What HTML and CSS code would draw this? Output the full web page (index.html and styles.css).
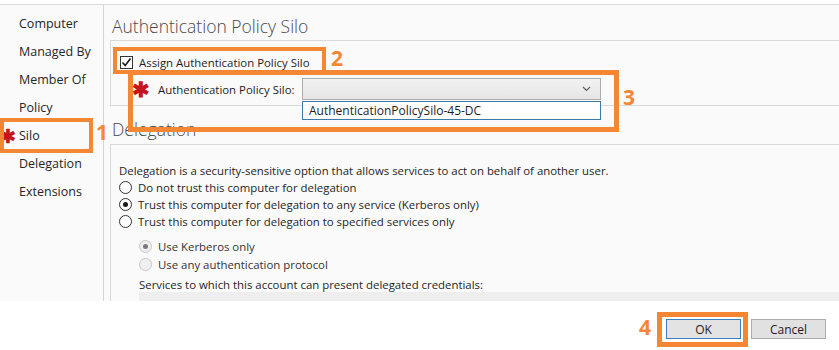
FILE: index.html
```html
<!DOCTYPE html>
<html>
    <head>
        <title>Authentication Policy Silo</title>
        <link rel="stylesheet" href="styles.css">
    </head>
    <body>
        <div class="window">
            <div class="main">
                <ul class="nav">
                    <li>Computer</li>
                    <li>Managed By</li>
                    <li>Member Of</li>
                    <li>Policy</li>
                    <li><span class="req">&#10033;</span>Silo</li>
                    <li>Delegation</li>
                    <li>Extensions</li>
                </ul>
                <div class="content">
                    <h2>Authentication Policy Silo</h2>
                    <div class="group silo">
                        <label class="checkRow">
                            <span class="check">
                                <svg width="11" height="11" viewBox="0 0 11 11">
                                    <polyline points="1.5,5.5 4.2,8.5 9.5,1.5" fill="none" stroke="#1a1a1a" stroke-width="1.6" />
                                </svg>
                            </span>
                            Assign Authentication Policy Silo
                        </label>
                        <div class="fieldRow">
                            <span class="req big">&#10033;</span>
                            <span class="fieldLabel">Authentication Policy Silo:</span>
                            <div class="combo">
                                <svg class="chevron" width="9" height="6" viewBox="0 0 9 6">
                                    <polyline points="1,1 4.5,4.5 8,1" fill="none" stroke="#606060" stroke-width="1.2" />
                                </svg>
                                <div class="dropList">AuthenticationPolicySilo-45-DC</div>
                            </div>
                        </div>
                    </div>

                    <h2>Delegation</h2>
                    <div class="group deleg">
                        <p class="intro">Delegation is a security-sensitive option that allows services to act on behalf of another user.</p>
                        <div class="radio"><span class="dot"></span>Do not trust this computer for delegation</div>
                        <div class="radio"><span class="dot on"></span>Trust this computer for delegation to any service (Kerberos only)</div>
                        <div class="radio"><span class="dot"></span>Trust this computer for delegation to specified services only</div>
                        <div class="sub">
                            <div class="radio off"><span class="dot on"></span>Use Kerberos only</div>
                            <div class="radio off"><span class="dot"></span>Use any authentication protocol</div>
                            <p class="services">Services to which this account can present delegated credentials:</p>
                            <div class="serviceList"></div>
                        </div>
                    </div>
                </div>
            </div>
            <div class="footer">
                <button class="btn default">OK</button>
                <button class="btn">Cancel</button>
            </div>

            <!-- callouts -->
            <div class="mark m1"></div><span class="num n1">1</span>
            <div class="mark m2"></div><span class="num n2">2</span>
            <div class="mark m3"></div><span class="num n3">3</span>
            <div class="mark m4"></div><span class="num n4">4</span>
        </div>
    </body>
</html>
```

FILE: styles.css
```css
body {
    margin: 0;
    background: #fff;
    font-family: 'Open Sans', 'Noto Sans', sans-serif;
    font-size: 11.4px;
    color: #1e1e1e;
}

.window {
    position: relative;
    width: 839px;
    height: 350px;
    overflow: hidden;
}

.main {
    display: flex;
    margin-top: 4px;
    height: 296px;
    border-top: 1px solid #dadada;
    background: #fafafa;
    overflow: hidden;
}

.nav {
    list-style: none;
    margin: 0;
    padding: 5px 0 0 0;
    width: 103px;
    border-right: 1px solid #d5d5d5;
    flex-shrink: 0;
}

.nav li {
    height: 28px;
    line-height: 28px;
    padding-left: 19px;
    font-size: 12.5px;
    color: #262626;
}

.req {
    display: inline-block;
    color: #c4161c;
    font-weight: bold;
}

.nav .req {
    width: 19px;
    margin-left: -19px;
    font-size: 19px;
    vertical-align: top;
}

.content {
    flex: 1;
    padding-left: 6px;
}

h2 {
    margin: 0;
    font-weight: 300;
    font-size: 17.5px;
    color: #4a4a4a;
    padding-left: 2px;
    line-height: 24px;
}

.content h2:first-child {
    margin-top: 9px;
}

.group {
    border: 1px solid #d9d9d9;
    border-right: none;
    background: #fafafa;
}

.silo {
    margin-top: 2px;
    height: 66px;
    padding: 12px 0 0 9px;
    box-sizing: border-box;
}

.checkRow {
    display: flex;
    align-items: center;
    height: 18px;
    gap: 6px;
}

.check {
    width: 11px;
    height: 11px;
    border: 1px solid #333;
    background: #fff;
    display: flex;
    align-items: center;
    justify-content: center;
}

.fieldRow {
    display: flex;
    align-items: center;
    margin-top: 7px;
    padding-left: 12px;
    height: 22px;
}

.req.big {
    width: 26px;
    font-size: 21px;
}

.fieldLabel {
    width: 144px;
}

.combo {
    position: relative;
    width: 297px;
    height: 20px;
    border: 1px solid #acacac;
    background: linear-gradient(#f2f2f2, #e5e5e5);
}

.chevron {
    position: absolute;
    right: 9px;
    top: 7px;
}

.dropList {
    position: absolute;
    left: -1px;
    top: 22px;
    width: 291px;
    height: 17px;
    line-height: 17px;
    padding-left: 6px;
    background: #fff;
    border: 1px solid #3c7aa6;
    font-size: 12px;
    z-index: 2;
}

.silo + h2 {
    margin-top: 11px;
}

.deleg {
    margin-top: 3px;
    padding: 17px 0 0 8px;
    height: 200px;
}

.intro {
    margin: 0;
    line-height: 17px;
}

.radio {
    display: flex;
    align-items: center;
    height: 17px;
    gap: 6px;
}

.dot {
    width: 11px;
    height: 11px;
    border: 1px solid #333;
    border-radius: 50%;
    background: #fff;
    position: relative;
}

.dot.on:after {
    content: '';
    position: absolute;
    left: 3px;
    top: 3px;
    width: 5px;
    height: 5px;
    border-radius: 50%;
    background: #1a1a1a;
}

.sub {
    padding-left: 20px;
    margin-top: 7px;
}

.sub .radio {
    height: 18px;
}

.radio.off {
    color: #333;
}

.radio.off .dot {
    border-color: #c6c6c6;
    background: #f0f0f0;
}

.radio.off .dot.on:after {
    background: #7a7a7a;
}

.services {
    margin: 4px 0 0 0;
    line-height: 15px;
}

.serviceList {
    background: #eeeeee;
    height: 40px;
}

.footer {
    display: flex;
    justify-content: flex-end;
    gap: 10px;
    padding: 18px 13px 0 0;
}

.btn {
    width: 75px;
    height: 20px;
    font-family: inherit;
    font-size: 12px;
    color: #1e1e1e;
    background: #e1e1e1;
    border: 1px solid #adadad;
    padding: 0;
}

.btn.default {
    border-color: #3b7ec1;
    background: #e3e3e3;
}

/* orange callouts */
.mark {
    position: absolute;
    border: 4px solid #f58634;
    box-sizing: border-box;
}

.num {
    position: absolute;
    color: #f58634;
    font-weight: bold;
    font-size: 21px;
    line-height: 21px;
}

.m1 { left: 0; top: 118px; width: 93px; height: 35px; }
.n1 { left: 96px; top: 122px; }

.m2 { left: 113px; top: 47px; width: 213px; height: 27px; }
.n2 { left: 331px; top: 48px; }

.m3 { left: 128px; top: 70px; width: 491px; height: 62px; border-width: 5px; }
.n3 { left: 623px; top: 87px; }

.m4 { left: 657px; top: 312px; width: 91px; height: 35px; border-width: 5px; }
.n4 { left: 639px; top: 317px; }
```
